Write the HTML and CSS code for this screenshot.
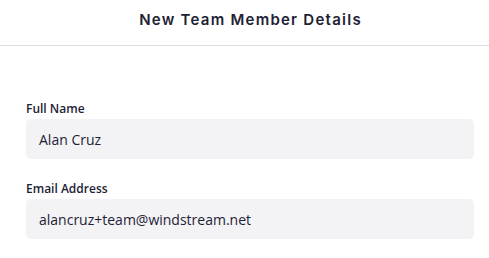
FILE: index.html
```html
<!DOCTYPE html>
<html>
<head>
<meta charset="utf-8">
<link rel="stylesheet" href="styles.css">
</head>
<body>
<div class="panel">
  <header class="panel-header">
    <h1 class="panel-title">New Team Member Details</h1>
  </header>
  <form class="form">
    <div class="field">
      <label class="field-label">Full Name</label>
      <div class="field-input">Alan Cruz</div>
    </div>
    <div class="field">
      <label class="field-label">Email Address</label>
      <div class="field-input">alancruz+team@windstream.net</div>
    </div>
  </form>
</div>
</body>
</html>
```
FILE: styles.css
```css
html, body {
  margin: 0;
  padding: 0;
  background: #ffffff;
}
body {
  font-family: "Open Sans", sans-serif;
  color: #1e2235;
}
.panel {
  width: 489px;
}
.panel-header {
  height: 46px;
  border-bottom: 1px solid #dddddf;
  display: flex;
  align-items: flex-start;
  justify-content: center;
  box-sizing: border-box;
  padding: 11px 0 0 12px;
}
.panel-title {
  margin: 0;
  font-family: "Inter", sans-serif;
  font-weight: 600;
  font-size: 15px;
  line-height: 18px;
  letter-spacing: 1.25px;
  color: #1e2235;
}
.form {
  padding: 55px 15px 0 26px;
  display: flex;
  flex-direction: column;
  gap: 22px;
}
.field {
  display: flex;
  flex-direction: column;
  gap: 2px;
}
.field-label {
  font-size: 12px;
  font-weight: 600;
  line-height: 16px;
  color: #1e2235;
}
.field-input {
  height: 40px;
  box-sizing: border-box;
  background: #f3f3f6;
  border-radius: 5px;
  padding: 0 13px;
  display: flex;
  align-items: center;
  font-size: 14px;
  color: #1e2235;
}
```
